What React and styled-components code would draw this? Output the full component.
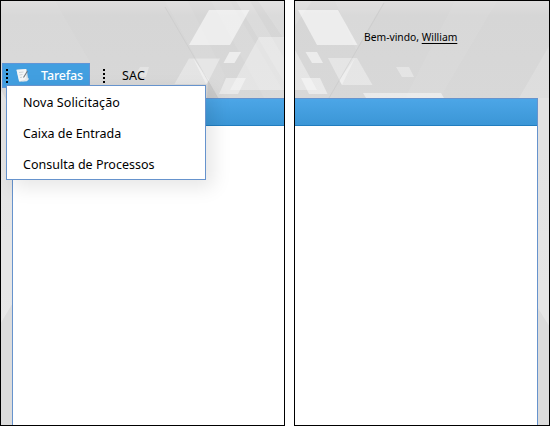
import React from "react";
import styled, { createGlobalStyle } from "styled-components";

const Global = createGlobalStyle`
  *, *::before, *::after { box-sizing: border-box; }
  body { margin: 0; background: #fff; overflow: hidden; font-family: "Noto Sans", "Open Sans", sans-serif; color: #000; }
`;

const Screen = styled.main`
  display: flex;
  gap: 9px;
  width: 550px;
  height: 426px;
`;

const Panel = styled.section`
  position: relative;
  display: flex;
  flex-direction: column;
  width: ${(p) => p.$width}px;
  height: 426px;
  padding: ${(p) => p.$padding};
  border: 1px solid #000;
  background: linear-gradient(#dedddd 0, #d6d6d6 15px, #d8d8d8 100px, #dfdfdf 100%);
`;

const Backdrop = styled.svg`
  position: absolute;
  top: 0;
  left: 0;
  width: 100%;
  height: 100%;
`;

const Header = styled.header`
  position: relative;
  z-index: 2;
  height: 97px;
  flex: none;
`;

const MenuBar = styled.nav`
  display: flex;
  align-items: flex-start;
  padding: 62px 0 0 1px;
`;

const MenuTab = styled.div`
  display: flex;
  align-items: center;
  width: 88px;
  height: 25px;
  padding-left: 3px;
  border: 1px solid #5f95d8;
  background: #429fe0;
  color: #fff;
`;

const MenuItem = styled.div`
  display: flex;
  align-items: center;
  height: 25px;
  padding-left: 13px;
`;

const Grip = styled.span`
  width: 2px;
  height: 14px;
  flex: none;
  background: repeating-linear-gradient(#000 0 2px, transparent 2px 4px);
`;

const NoteIcon = styled.svg`
  width: 14px;
  height: 15px;
  margin-left: 8px;
`;

const MenuLabel = styled.span`
  margin-left: ${(p) => p.$gap}px;
  font-size: 12.5px;
  font-weight: ${(p) => p.$weight || 400};
  line-height: 20px;
  letter-spacing: ${(p) => p.$spacing || 0}px;
  white-space: nowrap;
`;

const Dropdown = styled.ul`
  position: absolute;
  top: 84px;
  left: 5px;
  width: 200px;
  height: 95px;
  margin: 0;
  padding: 1px 0 0;
  list-style: none;
  background: #fff;
  border: 1px solid #6693cd;
  box-shadow: 7px 7px 18px rgba(0, 0, 0, 0.1);
`;

const DropdownItem = styled.li`
  height: 31px;
  padding-left: 16px;
  font-size: 12.5px;
  line-height: 31px;
  letter-spacing: ${(p) => p.$spacing || 0}px;
  white-space: nowrap;
`;

const Content = styled.div`
  position: relative;
  flex: 1;
  margin-left: ${(p) => p.$inset || 0}px;
  background: #fff;
  border: 0 solid #6693cd;
  border-width: ${(p) => p.$borders};
`;

const TitleBand = styled.div`
  height: 27px;
  border-bottom: 1px solid #217dbf;
  background: linear-gradient(#4ca6e7, #3b96d6);
`;

const Welcome = styled.div`
  padding: 29px 0 0 69px;
  font-size: 10.3px;
  line-height: 14px;
  white-space: nowrap;
`;

const UserLink = styled.span`
  text-decoration: underline;
  text-underline-offset: 2px;
`;

function LeftBackdrop() {
  return (
    <Backdrop viewBox="1 1 283 424" preserveAspectRatio="none">
      <g fill="#fff">
        <path d="M1 1H55L90 62H1Z" opacity=".05" />
        <path d="M165 1H188L225 75L218 98Z" opacity=".06" />
        <path d="M211 1H230L284 92V98H264Z" opacity=".08" />
        <path d="M236 1H250L284 58V82Z" opacity=".14" />
        <path d="M258 1H284V39Z" opacity=".14" />
        <path d="M209 10H249.5L230 45H189Z" opacity=".56" />
        <path d="M229.5 52H241L234.5 63H223.5Z" opacity=".56" />
        <path d="M189 58.5H220L207 84H174.5Z" opacity=".34" />
        <path d="M259 37H284V90H230Z" opacity=".34" />
        <path d="M226 78H246L238 94H219Z" opacity=".42" />
        <path d="M140 67H149L146 77H134Z" opacity=".3" />
        <path d="M1 90L13 112V303L1 323Z" opacity=".3" />
        <path d="M193 58L209 80L206 84Z" opacity=".4" />
      </g>
      <path d="M165 7L218 98" stroke="#c2c2c2" strokeWidth=".7" opacity=".5" />
      <path d="M208 81L218 98H207Z" fill="#bababa" opacity=".4" />
      <path d="M1 323L13 303V425H1Z" fill="#dcdcdc" />
    </Backdrop>
  );
}

function RightBackdrop() {
  return (
    <Backdrop viewBox="295 1 254 424" preserveAspectRatio="none">
      <g fill="#fff">
        <path d="M335 1H384L356 50Z" opacity=".08" />
        <path d="M295 1H312L295 26Z" opacity=".12" />
        <path d="M455 1H497L440 98H405Z" opacity=".05" />
        <path d="M549 46V98H519Z" opacity=".16" />
        <path d="M298 10H338L357.5 45H317Z" opacity=".56" />
        <path d="M305.5 52H317L323 63H312Z" opacity=".52" />
        <path d="M328 58H357L372.5 85H342Z" opacity=".36" />
        <path d="M295 50L317 90H295Z" opacity=".36" />
        <path d="M301 78H320L327.5 94H309Z" opacity=".46" />
        <path d="M396 67H409L414 77H402Z" opacity=".34" />
        <path d="M363 93H441L444 98H366Z" opacity=".46" />
        <path d="M537 98H549V326L537 307Z" opacity=".25" />
        <path d="M355 58L339 80L342 85Z" opacity=".35" />
      </g>
      <path d="M384 3L329 98" stroke="#bebebe" strokeWidth=".7" opacity=".5" />
      <path d="M537 307L549 326V425H537Z" fill="#dcdcdc" />
    </Backdrop>
  );
}

export default function App() {
  return (
    <>
      <Global />
      <Screen>
        <Panel $width={285} $padding="0">
          <LeftBackdrop />
          <Header>
            <MenuBar>
              <MenuTab>
                <Grip />
                <NoteIcon viewBox="0 0 14 15">
                  <path d="M.5 1.5L10.5 1L12.5 12L3.5 14Z" fill="#cfd8de" />
                  <path d="M.5 2L10 1L10.5 12L3 13.2Z" fill="#f4f6f7" />
                  <path d="M3 4.5L7.5 4M3.5 7L6.5 6.5M4 9.5L6 9.2" stroke="#bcc4c9" strokeWidth=".7" />
                  <path d="M11.5 3L7.5 9.5" stroke="#727a80" strokeWidth="1.1" />
                  <path d="M9.5 10L13 10.5L11 13.2L5 13.8L8.5 12.5Z" fill="#e6eaec" />
                </NoteIcon>
                <MenuLabel $gap={11} $weight={500} $spacing={-0.15}>Tarefas</MenuLabel>
              </MenuTab>
              <MenuItem>
                <Grip />
                <MenuLabel $gap={17} $spacing={0.2}>SAC</MenuLabel>
              </MenuItem>
            </MenuBar>
            <Dropdown>
              <DropdownItem $spacing={0.08}>Nova Solicitação</DropdownItem>
              <DropdownItem $spacing={-0.04}>Caixa de Entrada</DropdownItem>
              <DropdownItem>Consulta de Processos</DropdownItem>
            </Dropdown>
          </Header>
          <Content $inset={11} $borders="1px 0 0 1px">
            <TitleBand />
          </Content>
        </Panel>
        <Panel $width={256} $padding="0 11px 0 0">
          <RightBackdrop />
          <Header>
            <Welcome>
              Bem-vindo, <UserLink>William</UserLink>
            </Welcome>
          </Header>
          <Content $borders="1px 1px 0 0">
            <TitleBand />
          </Content>
        </Panel>
      </Screen>
    </>
  );
}
